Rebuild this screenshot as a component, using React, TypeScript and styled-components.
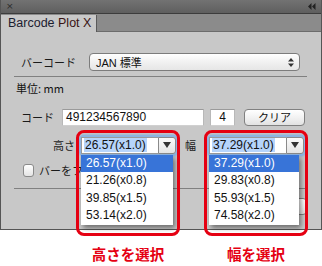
import styled, { createGlobalStyle } from "styled-components";

const GlobalStyle = createGlobalStyle`
  html, body {
    margin: 0;
    padding: 0;
    background: #ffffff;
  }
  body {
    font-family: "Liberation Sans", "Noto Sans CJK JP", sans-serif;
    font-size: 12px;
    color: #111;
  }
`;

const Page = styled.div`
  width: 322px;
  height: 266px;
  position: relative;
  overflow: hidden;
`;

// Panel frame
const Panel = styled.div`
  width: 322px;
  height: 230px;
  box-sizing: border-box;
  border: 1px solid #555;
  border-top: none;
  background: #c8c8c8;
  display: flex;
  flex-direction: column;
`;

const TitleBar = styled.div`
  height: 13px;
  background: linear-gradient(#727272, #5f5f5f);
  border-bottom: 1px solid #3c3c3c;
  display: flex;
  align-items: center;
  justify-content: space-between;
  padding: 0 5px 0 5px;
`;

const CloseGlyph = styled.span`
  font-family: "DejaVu Sans", sans-serif;
  font-size: 9px;
  line-height: 9px;
  color: #2a2a2a;
`;

const TabStrip = styled.div`
  height: 17px;
  background: #8b8b8b;
  border-bottom: 1px solid #6c6c6c;
  display: flex;
  align-items: flex-end;
`;

const Tab = styled.div`
  height: 17px;
  width: 96px;
  box-sizing: border-box;
  margin-bottom: -1px;
  background: #c8c8c8;
  border-right: 1px solid #5a5a5a;
  padding-left: 7px;
  font-size: 12.5px;
  line-height: 17px;
  color: #1c2030;
  white-space: nowrap;
  overflow: hidden;

  span {
    color: #3a1414;
  }
`;

const Body = styled.div`
  flex: 1;
  padding: 0 14px 0 13px;
  display: flex;
  flex-direction: column;
`;

const Row = styled.div<{ $top: number; $left?: number }>`
  display: flex;
  align-items: center;
  margin-top: ${(p) => p.$top}px;
  padding-left: ${(p) => p.$left ?? 0}px;
  height: 18px;
`;

const Label = styled.span<{ $width?: number }>`
  font-family: "Noto Sans CJK JP", sans-serif;
  font-size: 11px;
  color: #1a1a1a;
  width: ${(p) => (p.$width ? `${p.$width}px` : "auto")};
  flex: none;
  white-space: nowrap;
  overflow: hidden;
`;

const Select = styled.div`
  width: 211px;
  height: 18px;
  box-sizing: border-box;
  border: 1px solid #7c7c7c;
  border-radius: 4px;
  background: linear-gradient(#ffffff, #f1f1f1 50%, #e6e6e6);
  display: flex;
  align-items: center;
  justify-content: space-between;
  padding: 0 5px 0 6px;
  font-size: 11px;
  font-family: "Liberation Sans", "Noto Sans CJK JP", sans-serif;
`;

const Rule = styled.div<{ $top: number }>`
  height: 1px;
  background: #808080;
  margin-top: ${(p) => p.$top}px;
`;

const Unit = styled.div`
  margin-top: 4px;
  padding-left: 2px;
  font-family: "Noto Sans CJK JP", sans-serif;
  font-size: 11px;
  line-height: 14px;
`;

const TextField = styled.div<{ $width: number; $center?: boolean }>`
  width: ${(p) => p.$width}px;
  height: 17px;
  box-sizing: border-box;
  background: #fff;
  border-top: 1px solid #9a9a9a;
  border-left: 1px solid #b8b8b8;
  border-right: 1px solid #b8b8b8;
  border-bottom: 1px solid #d0d0d0;
  display: flex;
  align-items: center;
  justify-content: ${(p) => (p.$center ? "center" : "flex-start")};
  padding-left: ${(p) => (p.$center ? 0 : 3)}px;
  font-size: 12px;
  flex: none;
`;

const PushButton = styled.div<{ $width: number }>`
  width: ${(p) => p.$width}px;
  height: 17px;
  box-sizing: border-box;
  border: 1px solid #808080;
  border-radius: 4px;
  background: linear-gradient(#ffffff, #f2f2f2 50%, #e2e2e2);
  display: flex;
  align-items: center;
  justify-content: center;
  font-family: "Noto Sans CJK JP", sans-serif;
  font-size: 11px;
  flex: none;
`;

const ComboWrap = styled.div`
  position: relative;
  width: 95px;
  height: 17px;
  flex: none;
`;

const Combo = styled.div`
  width: 95px;
  height: 17px;
  box-sizing: border-box;
  display: flex;
  border-radius: 3px;
  box-shadow: 0 0 0 2px #8db4e2, 0 0 2px 3px rgba(120, 165, 220, 0.5);
`;

const ComboField = styled.div`
  flex: 1;
  background: #fff;
  border: 1px solid #9a9a9a;
  border-right: none;
  display: flex;
  align-items: center;
  padding-left: 2px;
  font-size: 12px;

  mark {
    background: #b6d4fb;
    color: #111;
    padding: 0 1px;
  }
`;

const ComboButton = styled.div`
  width: 16px;
  background: linear-gradient(#fafafa, #e4e4e4);
  border: 1px solid #8a8a8a;
  border-radius: 0 3px 3px 0;
  display: flex;
  align-items: center;
  justify-content: center;
`;

const MenuList = styled.div<{ $width: number }>`
  position: absolute;
  left: 0;
  top: 18px;
  width: ${(p) => p.$width}px;
  background: #fff;
  box-shadow: 2px 3px 5px rgba(0, 0, 0, 0.45);
  z-index: 3;
`;

const MenuItem = styled.div<{ $active?: boolean }>`
  height: 17.5px;
  line-height: 17.5px;
  padding-left: 5px;
  font-size: 12px;
  background: ${(p) => (p.$active ? "#3874d8" : "transparent")};
  color: ${(p) => (p.$active ? "#fff" : "#111")};
`;

const Callout = styled.div`
  position: absolute;
  left: -5px;
  top: -7px;
  width: 104px;
  height: 106px;
  box-sizing: border-box;
  border: 3px solid #e50012;
  border-radius: 8px;
  z-index: 4;
  pointer-events: none;
`;

const CalloutText = styled.div`
  position: absolute;
  left: -5px;
  top: 108px;
  width: 104px;
  text-align: center;
  font-family: "Noto Sans CJK JP", sans-serif;
  font-weight: bold;
  font-size: 14.5px;
  line-height: 18px;
  color: #e50012;
  white-space: nowrap;
`;

const Checkbox = styled.div`
  width: 11px;
  height: 13px;
  box-sizing: border-box;
  border: 1px solid #8a8a8a;
  border-radius: 3px;
  background: linear-gradient(#ffffff, #e4e4e4);
  margin-right: 5px;
  flex: none;
`;

const ActionRow = styled.div`
  margin-top: 9px;
  display: flex;
  justify-content: flex-end;
`;

const UpDown = () => (
  <svg width="6" height="9" viewBox="0 0 6 9">
    <path d="M0 3.5 L3 0 L6 3.5 Z M0 5.5 L3 9 L6 5.5 Z" fill="#333" />
  </svg>
);

const DownArrow = () => (
  <svg width="8" height="6" viewBox="0 0 8 6">
    <path d="M0 0 L8 0 L4 6 Z" fill="#333" />
  </svg>
);

const CollapseIcon = () => (
  <svg width="8" height="7" viewBox="0 0 8 7">
    <path d="M0 3.5 L3.5 0 L3.5 7 Z M4 3.5 L7.5 0 L7.5 7 Z" fill="#222" />
  </svg>
);

type SizeComboProps = {
  value: string;
  options: string[];
  listWidth: number;
  caption: string;
};

const SizeCombo = ({ value, options, listWidth, caption }: SizeComboProps) => (
  <ComboWrap>
    <Combo>
      <ComboField>
        <mark>{value}</mark>
      </ComboField>
      <ComboButton>
        <DownArrow />
      </ComboButton>
    </Combo>
    <MenuList $width={listWidth}>
      {options.map((o, i) => (
        <MenuItem key={o} $active={i === 0}>
          {o}
        </MenuItem>
      ))}
    </MenuList>
    <Callout />
    <CalloutText>{caption}</CalloutText>
  </ComboWrap>
);

export default function App() {
  return (
    <Page>
      <GlobalStyle />
      <Panel>
        <TitleBar>
          <CloseGlyph>×</CloseGlyph>
          <CollapseIcon />
        </TitleBar>
        <TabStrip>
          <Tab>
            Barcode <span>Plot X</span>
          </Tab>
        </TabStrip>
        <Body>
          <Row $top={21} $left={7}>
            <Label $width={68}>バーコード</Label>
            <Select>
              <span>JAN 標準</span>
              <UpDown />
            </Select>
          </Row>
          <Rule $top={5} />
          <Unit>単位: mm</Unit>
          <Row $top={13} $left={7}>
            <Label $width={41}>コード</Label>
            <TextField $width={142}>491234567890</TextField>
            <TextField $width={25} $center style={{ marginLeft: 6 }}>
              4
            </TextField>
            <PushButton $width={61} style={{ marginLeft: 9 }}>
              クリア
            </PushButton>
          </Row>
          <Row $top={10} $left={39}>
            <Label $width={28}>高さ</Label>
            <SizeCombo
              value="26.57(x1.0)"
              options={["26.57(x1.0)", "21.26(x0.8)", "39.85(x1.5)", "53.14(x2.0)"]}
              listWidth={92}
              caption="高さを選択"
            />
            <Label $width={33} style={{ paddingLeft: 9, boxSizing: "border-box" }}>
              幅
            </Label>
            <SizeCombo
              value="37.29(x1.0)"
              options={["37.29(x1.0)", "29.83(x0.8)", "55.93(x1.5)", "74.58(x2.0)"]}
              listWidth={90}
              caption="幅を選択"
            />
          </Row>
          <Row $top={7} $left={9}>
            <Checkbox />
            <Label $width={42}>バーをフチに合わせる</Label>
          </Row>
          <Rule $top={9} />
          <ActionRow>
            <PushButton $width={70} />
          </ActionRow>
        </Body>
      </Panel>
    </Page>
  );
}
